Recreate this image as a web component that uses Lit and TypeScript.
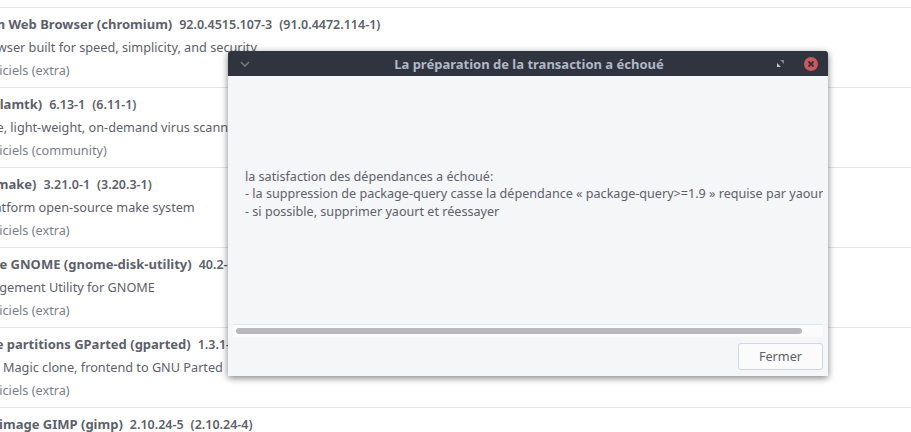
import { LitElement, html, css } from "lit";
import { customElement } from "lit/decorators.js";

const rows = [
  ["Chromium Web Browser (chromium)", "92.0.4515.107-3", "(91.0.4472.114-1)", "A web browser built for speed, simplicity, and security", "extra"],
  ["ClamTk (clamtk)", "6.13-1", "(6.11-1)", "Easy to use, light-weight, on-demand virus scanner for Linux", "community"],
  ["CMake (cmake)", "3.21.0-1", "(3.20.3-1)", "A cross-platform open-source make system", "extra"],
  ["Disques de GNOME (gnome-disk-utility)", "40.2-1", "(40.1-1)", "Disk Management Utility for GNOME", "extra"],
  ["Éditeur de partitions GParted (gparted)", "1.3.1-1", "(1.3.0-1)", "A Partition Magic clone, frontend to GNU Parted", "extra"],
  ["Éditeur d'image GIMP (gimp)", "2.10.24-5", "(2.10.24-4)", "", "extra"],
];

@customElement("app-root")
export class AppRoot extends LitElement {
  static styles = css`
    :host {
      display: block;
      position: relative;
      width: 911px;
      height: 432px;
      overflow: hidden;
      background: #fff;
      font-family: "Noto Sans", "Open Sans", sans-serif;
      font-size: 12.7px;
      color: #5c616c;
    }
    .list { padding-top: 7px; margin-left: -63px; }
    .row {
      height: 80px;
      box-sizing: border-box;
      border-top: 1px solid #e4e4e6;
      display: flex;
      flex-direction: column;
      padding-top: 7px;
      gap: 5px;
    }
    .row > div { height: 18px; line-height: 18px; white-space: nowrap; }
    .name { font-weight: 700; font-size: 13px; display: flex; gap: 7px; align-items: baseline; }
    .ver { font-weight: 600; font-size: 12.5px; }
    .repo { color: #7c8088; }
    .dialog {
      position: absolute;
      left: 228px;
      top: 51px;
      width: 600px;
      height: 325px;
      display: flex;
      flex-direction: column;
      background: #f5f6f7;
      box-shadow: 0 2px 7px rgba(0, 0, 0, 0.5);
      border-radius: 3px 3px 0 0;
      overflow: hidden;
    }
    .head {
      height: 25px;
      flex: none;
      background: #2f343f;
      color: #afb8c6;
      display: flex;
      align-items: center;
      padding: 0 10px;
      gap: 10px;
    }
    .title { flex: 1; text-align: center; font-weight: 700; font-size: 13px; padding-left: 30px; }
    .chev { width: 12px; height: 8px; display: block; margin-left: 1px; }
    .res { width: 7px; height: 7px; display: block; margin-right: 10px; }
    .close { width: 14px; height: 14px; display: block; }
    .body {
      flex: 1;
      margin: 0 5px;
      overflow: hidden;
      display: flex;
      align-items: center;
      padding-left: 12px;
      padding-bottom: 12px;
      white-space: pre;
      line-height: 17.5px;
      font-size: 12.6px;
    }
    .track {
      flex: none;
      height: 13px;
      margin: 0 5px;
      box-sizing: border-box;
      background: #fbfbfc;
      border-top: 1px solid #e2e3e6;
      padding: 3px 21px 0 3px;
    }
    .thumb { height: 6px; background: #b8b8bd; border-radius: 3px; }
    .foot { flex: none; height: 39px; display: flex; justify-content: flex-end; align-items: flex-start; padding: 6px 5px 0 0; box-sizing: border-box; }
    .btn {
      width: 85px;
      height: 27px;
      box-sizing: border-box;
      border: 1px solid #cfd6e6;
      border-radius: 3px;
      background: #fbfbfc;
      color: #5c616c;
      font: inherit;
      padding: 0 0 1px;
    }
  `;

  render() {
    return html`
      <div class="list">
        ${rows.map(
          (r) => html`<div class="row">
            <div class="name"><span>${r[0]}</span><span class="ver">${r[1]}</span><span class="ver">${r[2]}</span></div>
            <div>${r[3]}</div>
            <div class="repo">Dépôts officiels (${r[4]})</div>
          </div>`
        )}
      </div>
      <div class="dialog">
        <div class="head">
          <svg class="chev" viewBox="0 0 12 8"><path d="M2 2l4 4 4-4" fill="none" stroke="#6f7684" stroke-width="1.6"/></svg>
          <div class="title">La préparation de la transaction a échoué</div>
          <svg class="res" viewBox="0 0 8 8"><path d="M3.5 0H8V4.5z" fill="#7f848f"/><path d="M0 3.5V8H4.5z" fill="#c4c7cd"/></svg>
          <svg class="close" viewBox="0 0 14 14"><circle cx="7" cy="7" r="7" fill="#cc575d"/><path d="M4.5 4.5l5 5M9.5 4.5l-5 5" stroke="#2f343f" stroke-width="1.8"/></svg>
        </div>
        <div class="body">la satisfaction des dépendances a échoué:
- la suppression de package-query casse la dépendance « package-query>=1.9 » requise par yaourt
- si possible, supprimer yaourt et réessayer</div>
        <div class="track"><div class="thumb"></div></div>
        <div class="foot"><button class="btn">Fermer</button></div>
      </div>
    `;
  }
}
